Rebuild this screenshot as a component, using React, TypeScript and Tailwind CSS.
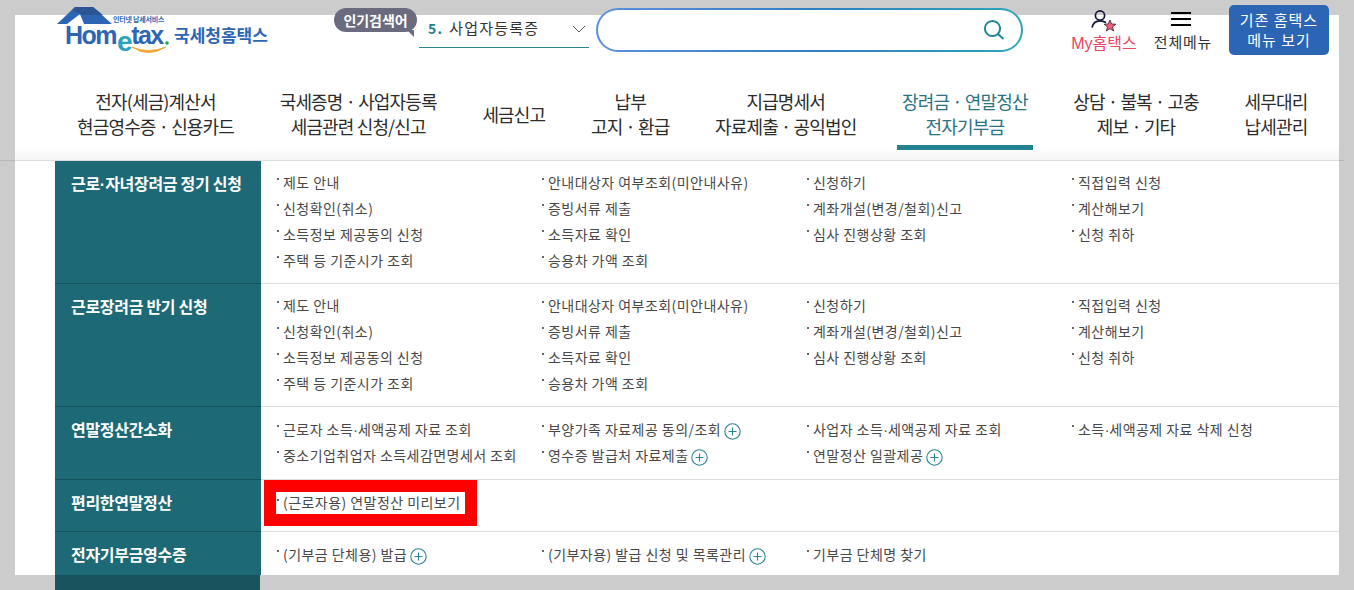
const font = { fontFamily: '"Noto Sans CJK KR", "Noto Sans", sans-serif' };

const navItems: { lines: string[]; active?: boolean }[] = [
  { lines: ["전자(세금)계산서", "현금영수증 · 신용카드"] },
  { lines: ["국세증명 · 사업자등록", "세금관련 신청/신고"] },
  { lines: ["세금신고"] },
  { lines: ["납부", "고지 · 환급"] },
  { lines: ["지급명세서", "자료제출 · 공익법인"] },
  { lines: ["장려금 · 연말정산", "전자기부금"], active: true },
  { lines: ["상담 · 불복 · 고충", "제보 · 기타"] },
  { lines: ["세무대리", "납세관리"] },
];

type Item = { t: string; plus?: boolean; mark?: boolean };
const full: (Item | null)[] = [
  { t: "제도 안내" }, { t: "안내대상자 여부조회(미안내사유)" }, { t: "신청하기" }, { t: "직접입력 신청" },
  { t: "신청확인(취소)" }, { t: "증빙서류 제출" }, { t: "계좌개설(변경/철회)신고" }, { t: "계산해보기" },
  { t: "소득정보 제공동의 신청" }, { t: "소득자료 확인" }, { t: "심사 진행상황 조회" }, { t: "신청 취하" },
  { t: "주택 등 기준시가 조회" }, { t: "승용차 가액 조회" }, null, null,
];

const rows: { title: string; h: string; pt: string; items: (Item | null)[] }[] = [
  { title: "근로·자녀장려금 정기 신청", h: "h-[123px]", pt: "pt-[8px]", items: full },
  { title: "근로장려금 반기 신청", h: "h-[123px]", pt: "pt-[8px]", items: full },
  {
    title: "연말정산간소화",
    h: "h-[73px]",
    pt: "pt-[9px]",
    items: [
      { t: "근로자 소득·세액공제 자료 조회" }, { t: "부양가족 자료제공 동의/조회", plus: true }, { t: "사업자 소득·세액공제 자료 조회" }, { t: "소득·세액공제 자료 삭제 신청" },
      { t: "중소기업취업자 소득세감면명세서 조회" }, { t: "영수증 발급처 자료제출", plus: true }, { t: "연말정산 일괄제공", plus: true }, null,
    ],
  },
  { title: "편리한연말정산", h: "h-[52px]", pt: "pt-[10px]", items: [{ t: "(근로자용) 연말정산 미리보기", mark: true }] },
  {
    title: "전자기부금영수증",
    h: "h-[43px]",
    pt: "pt-[9px]",
    items: [{ t: "(기부금 단체용) 발급", plus: true }, { t: "(기부자용) 발급 신청 및 목록관리", plus: true }, { t: "기부금 단체명 찾기" }],
  },
];

function Dotted({ t }: { t: string }) {
  const parts = t.split(/(·)/);
  return (
    <>
      {parts.map((p, i) =>
        p === "·" ? (
          <span key={i} className="font-['Liberation_Sans'] tracking-normal">·</span>
        ) : (
          <span key={i}>{p}</span>
        ),
      )}
    </>
  );
}

function Plus() {
  return (
    <svg width="17" height="17" viewBox="0 0 17 17" className="ml-[3px] mt-[4px] shrink-0" fill="none">
      <circle cx="8.5" cy="8.5" r="7.7" stroke="#2a8494" strokeWidth="1.1" />
      <path d="M8.5 4.5v8M4.5 8.5h8" stroke="#2a8494" strokeWidth="1.1" />
    </svg>
  );
}

function Cell({ item }: { item: Item | null }) {
  if (!item) return <div />;
  return (
    <div className="flex h-[26px] items-center">
      <div
        className={
          "relative flex items-center whitespace-nowrap pl-[7px] text-[14px] leading-[22px] tracking-[0.45px] text-[#484848] " +
          (item.mark ? "h-[22px] w-[189px] pb-[2px] outline outline-[12px] outline-[#ff0000]" : "")
        }
      >
        <span className="absolute left-[1px] top-[7px] h-[2px] w-[2px] bg-[#666]" />
        <span>
          <Dotted t={item.t} />
        </span>
        {item.plus && <Plus />}
      </div>
    </div>
  );
}

function Logo() {
  return (
    <div className="relative h-[50px] w-[220px]">
      <svg width="116" height="50" viewBox="0 0 116 50" className="block" fill="none">
        <path d="M2 19 L20 2 H38 L57 19 H29 L25 9 L12 19 Z" fill="#2d65b5" />
        <path d="M17 5 L20 2 H38 L48 10 H26 L25 9 Z" fill="#2a5592" />
        <path d="M77 42 Q93 53 111 42 Q93 49 77 42 Z" fill="#efa52c" stroke="#efa52c" strokeWidth="0.8" />
        <circle cx="112" cy="38" r="1.8" fill="#19a84c" />
      </svg>
      <span className="absolute left-[58px] top-[9px] whitespace-nowrap text-[7px] font-bold leading-[10px] tracking-[-0.2px] text-[#2d65b5]">
        인터넷 납세서비스
      </span>
      <span
        className="absolute left-[10px] top-[15px] whitespace-nowrap text-[25px] font-bold leading-[30px] tracking-[-1.5px] text-[#2d65b5]"
        style={{ fontFamily: '"Liberation Sans", sans-serif' }}
      >
        Hom
        <span className="relative top-[7px] ml-[1px] text-[28px] leading-[20px] text-[#27a3bf]">e</span>
        tax
      </span>
      <span className="absolute left-[119px] top-[20px] whitespace-nowrap text-[17px] font-bold leading-[20px] text-[#2d65b5]">
        국세청홈택스
      </span>
    </div>
  );
}

function UserStar() {
  return (
    <svg width="26" height="24" viewBox="0 0 26 24" fill="none">
      <circle cx="9" cy="7.5" r="4.6" stroke="#15173a" strokeWidth="1.7" />
      <path d="M1 19.5 C2 15 5 12.8 9 12.8 C11.5 12.8 13.5 13.4 15 14.6" stroke="#15173a" strokeWidth="1.7" />
      <path d="M19 12 L20.6 16 L24.9 16.2 L21.5 18.9 L22.7 23 L19 20.7 L15.3 23 L16.5 18.9 L13.1 16.2 L17.4 16 Z" fill="#f0607a" stroke="#3a2030" strokeWidth="0.8" />
    </svg>
  );
}

export default function App() {
  return (
    <div className="h-[590px] w-[1354px] overflow-hidden bg-[#cccccc] pt-[15px]" style={font}>
      <div className="mx-[15px] flex h-[560px] flex-col bg-white">
        <header className="-mt-[10px] flex h-[50px] shrink-0 items-start pl-[40px]">
          <Logo />
          <div className="relative ml-[59px] mt-[3px] flex h-[24px] w-[83px] items-center justify-center rounded-[12px] bg-[#6b6b80] text-[14px] font-bold tracking-[-0.1px] text-white">
            인기검색어
            <span className="absolute bottom-[-5px] right-[3px] h-0 w-0 border-l-[7px] border-t-[7px] border-l-transparent border-t-[#6b6b80]" />
          </div>
          <div className="ml-[2px] mt-[5px] flex h-[38px] w-[170px] items-center border-b border-[#2a8494] pl-[9px] pr-[3px] text-[15px] tracking-[1.2px] text-[#333]">
            <b className="mr-[6px] text-[14px] text-[#1f7f92]">5.</b>
            <span className="flex-1">사업자등록증</span>
            <svg width="14" height="8" viewBox="0 0 14 8" fill="none">
              <path d="M1 1l6 6 6-6" stroke="#555" strokeWidth="1" />
            </svg>
          </div>
          <div className="ml-[7px] mt-[3px] h-[44px] w-[427px] rounded-[22px] bg-gradient-to-r from-[#5c90e0] via-[#2f7fc0] to-[#2fa4b8] p-[2px]">
            <div className="flex h-full items-center justify-end rounded-[20px] bg-white pr-[16px]">
              <svg width="22" height="22" viewBox="0 0 22 22" fill="none">
                <circle cx="9.5" cy="9.5" r="7.6" stroke="#1f8494" strokeWidth="2" />
                <path d="M15 15l5.5 5" stroke="#1f8494" strokeWidth="2" />
              </svg>
            </div>
          </div>
          <div className="ml-[47px] mt-[3px] flex w-[68px] flex-col items-center">
            <UserStar />
            <span className="whitespace-nowrap text-[16px] leading-[20px] text-[#ea4562]">
              <span style={{ fontFamily: '"Liberation Sans", sans-serif' }}>My</span>홈택스
            </span>
          </div>
          <div className="ml-[15px] mt-[7px] flex w-[60px] flex-col items-center">
            <div className="mr-[5px] flex h-[14px] w-[20px] flex-col justify-between">
              <span className="h-[2px] bg-black" />
              <span className="h-[2px] bg-black" />
              <span className="h-[2px] bg-black" />
            </div>
            <span className="mt-[6px] whitespace-nowrap text-[15px] leading-[20px] tracking-[0.8px] text-[#333]">전체메뉴</span>
          </div>
          <div className="ml-[16px] flex h-[50px] w-[100px] flex-col items-center justify-center rounded-[5px] bg-[#2d65b5] text-[15px] leading-[20px] tracking-[1px] text-white">
            <span>기존 홈택스</span>
            <span>메뉴 보기</span>
          </div>
        </header>

        <nav className="mt-[15px] flex h-[90px] shrink-0 gap-[45.7px] bg-gradient-to-b from-white from-[85%] to-[#f6f6f6] pl-[62px] pt-[19px] text-[18px] leading-[25px] tracking-[-0.85px] text-[#2b2b2b]">
          {navItems.map((n) => (
            <div
              key={n.lines[0]}
              className={
                "flex h-[61px] shrink-0 flex-col whitespace-nowrap text-center " +
                (n.lines.length === 1 ? "justify-center pb-[10px] " : "") +
                (n.active ? "-mx-[5px] border-b-[5px] border-[#22828f] px-[5px] text-[#2a7384]" : "")
              }
            >
              {n.lines.map((l) => (
                <span key={l}>{l}</span>
              ))}
            </div>
          ))}
        </nav>

        <div className="-ml-[15px] flex h-px w-[1344px] shrink-0 bg-[#dddddd]">
          <span className="w-[15px] bg-[#b8b8b8]" />
          <span className="flex-1" />
          <span className="w-[5px] bg-[#b8b8b8]" />
        </div>

        <div className="pl-[40px]">
          {rows.map((r, i) => (
            <div key={r.title} className={"grid grid-cols-[206px_1fr] " + (i < rows.length - 1 ? "border-b border-[#dddddd] " : "") + r.h}>
              <div className={"bg-[#1d6975] pl-[16px] pt-[12px] text-[16px] font-bold leading-[20px] tracking-[-0.3px] text-white " + (i < rows.length - 1 ? "-mb-px border-b border-[#154f59]" : "")}>
                <Dotted t={r.title} />
              </div>
              <div className={"grid grid-cols-[265px_265px_265px_1fr] content-start pl-[15px] " + r.pt}>
                {r.items.map((it, j) => (
                  <Cell key={j} item={it} />
                ))}
              </div>
            </div>
          ))}
        </div>
      </div>
      <div className="ml-[55px] h-[15px] w-[205px] bg-[#19535d]" />
    </div>
  );
}
